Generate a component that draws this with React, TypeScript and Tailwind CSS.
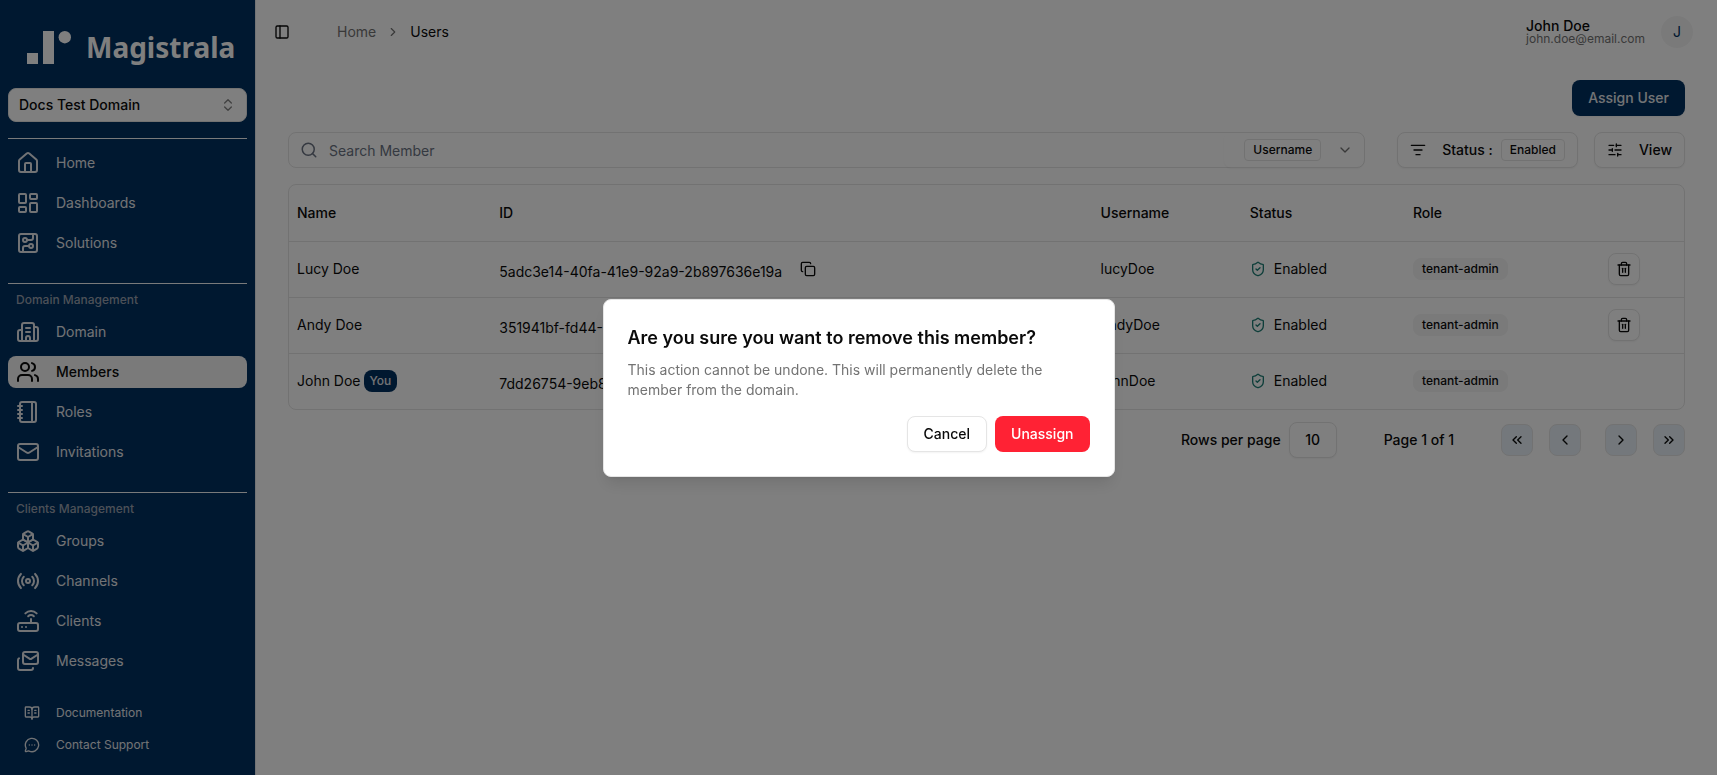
import React from "react";
import {
  BookOpenText, Boxes, ChevronDown, ChevronLeft, ChevronRight, ChevronsLeft, ChevronsRight, ChevronsUpDown,
  CircuitBoard, Copy, House, LayoutDashboard, ListFilter, Mail, Mails, MessageCircleMore, PanelLeft, Radio,
  Router, Search, ShieldCheck, SlidersHorizontal, Trash2, Users, Building2, Notebook,
} from "lucide-react";
import type { LucideIcon } from "lucide-react";

type NavItem = { label: string; icon: LucideIcon; active?: boolean };

const mainNav: NavItem[] = [
  { label: "Home", icon: House },
  { label: "Dashboards", icon: LayoutDashboard },
  { label: "Solutions", icon: CircuitBoard },
];
const domainNav: NavItem[] = [
  { label: "Domain", icon: Building2 },
  { label: "Members", icon: Users, active: true },
  { label: "Roles", icon: Notebook },
  { label: "Invitations", icon: Mail },
];
const clientsNav: NavItem[] = [
  { label: "Groups", icon: Boxes },
  { label: "Channels", icon: Radio },
  { label: "Clients", icon: Router },
  { label: "Messages", icon: Mails },
];
const members = [
  { name: "Lucy Doe", id: "5adc3e14-40fa-41e9-92a9-2b897636e19a", username: "lucyDoe", you: false },
  { name: "Andy Doe", id: "351941bf-fd44-4d0b-8c1e-6a1f0c7be2d3", username: "andyDoe", you: false },
  { name: "John Doe", id: "7dd26754-9eb8-4c57-a2f0-1f3f7c2f9b64", username: "johnDoe", you: true },
];

function Logo() {
  return (
    <div className="flex h-12 items-center gap-[15px] pl-[19px]">
      <svg viewBox="0 0 44 33" className="h-[33px] w-11 fill-white" aria-hidden="true">
        <rect x="0" y="22" width="11" height="11" />
        <rect x="16" y="0" width="11" height="33" />
        <circle cx="37.8" cy="6.2" r="6.2" />
      </svg>
      <span className="font-['Noto_Sans',sans-serif] text-[28px] leading-8 font-bold text-white">Magistrala</span>
    </div>
  );
}

function NavGroup({ title, items }: { title?: string; items: NavItem[] }) {
  return (
    <div className="border-t border-white/95">
      {title ? <h2 className="px-2 text-xs leading-8 font-medium text-gray-400">{title}</h2> : <div className="h-2" />}
      <ul className="flex flex-col gap-2">
        {items.map(({ label, icon: Icon, active }) => (
          <li key={label}>
            <a
              href="#"
              className={
                active
                  ? "flex h-8 items-center gap-4 rounded-lg bg-neutral-100 px-2 text-sm font-medium text-neutral-950"
                  : "flex h-8 items-center gap-4 rounded-lg px-2 text-sm text-gray-200"
              }
            >
              <Icon className="size-6" strokeWidth={2} />
              {label}
            </a>
          </li>
        ))}
      </ul>
    </div>
  );
}

function Sidebar() {
  return (
    <aside className="flex w-64 shrink-0 flex-col border-r border-gray-200 bg-[#003060] px-2 pt-[23px]">
      <Logo />
      <button className="mt-[17px] flex h-[34px] items-center justify-between rounded-lg border border-neutral-200 bg-white px-2.5 text-sm font-medium text-neutral-950">
        Docs Test Domain
        <ChevronsUpDown className="size-4 opacity-50" />
      </button>
      <nav className="mt-4 flex flex-col gap-6">
        <NavGroup items={mainNav} />
        <NavGroup title="Domain Management" items={domainNav} />
        <NavGroup title="Clients Management" items={clientsNav} />
      </nav>
      <div className="mt-5 flex flex-col pl-4 text-xs text-gray-200">
        <a href="#" className="flex h-8 items-center gap-4"><BookOpenText className="size-4" />Documentation</a>
        <a href="#" className="flex h-8 items-center gap-4"><MessageCircleMore className="size-4" />Contact Support</a>
      </div>
    </aside>
  );
}

function Header() {
  return (
    <header className="flex h-16 items-center justify-between pr-6 pl-[18px]">
      <div className="flex items-center">
        <button aria-label="Toggle sidebar" className="text-neutral-950"><PanelLeft className="size-4" /></button>
        <nav aria-label="Breadcrumb" className="ml-[47px] flex items-center gap-2.5 text-sm">
          <a href="#" className="text-neutral-500">Home</a>
          <ChevronRight className="size-3.5 text-neutral-500" />
          <span className="text-neutral-950">Users</span>
        </nav>
      </div>
      <div className="flex items-center gap-4">
        <div>
          <p className="text-sm leading-[14px] font-medium text-neutral-950">John Doe</p>
          <p className="text-xs leading-3 text-neutral-500">john.doe@email.com</p>
        </div>
        <span className="flex size-8 items-center justify-center rounded-full bg-neutral-100 text-sm text-[#003060]">J</span>
      </div>
    </header>
  );
}

const outline = "border border-neutral-200 bg-white shadow-xs";

function Toolbar() {
  return (
    <div className="mt-4 flex">
      <div className="flex h-9 flex-1 items-center rounded-lg border border-neutral-200 pl-[11px]">
        <Search className="size-[18px] text-gray-500" />
        <input aria-label="Search Member" placeholder="Search Member" className="mt-px ml-[11px] min-w-0 flex-1 bg-transparent text-sm placeholder:text-gray-500" />
        <button className="flex h-9 items-center rounded-lg pr-[11px] pl-5 shadow-xs">
          <span className="rounded-sm border border-neutral-200 px-2 text-xs leading-5 font-medium text-neutral-950">Username</span>
          <ChevronDown className="ml-4 size-4 text-neutral-500" />
        </button>
      </div>
      <button className={`ml-8 flex h-9 items-center rounded-lg px-3 text-sm font-medium text-neutral-950 ${outline}`}>
        <ListFilter className="size-4" />
        <span className="ml-4">Status :</span>
        <span className="ml-2 rounded-sm border border-neutral-200 px-2 text-xs leading-5">Enabled</span>
      </button>
      <button className={`ml-4 flex h-9 items-center gap-4 rounded-lg px-3 text-sm font-medium text-neutral-950 ${outline}`}>
        <SlidersHorizontal className="size-4" />
        View
      </button>
    </div>
  );
}

function MembersTable() {
  return (
    <div className="mt-4 overflow-hidden rounded-lg border border-neutral-200">
      <table className="w-full table-fixed text-sm text-neutral-950">
        <thead>
          <tr className="h-14 text-left">
            <th className="w-[14.5%] px-2 font-medium">Name</th>
            <th className="w-[43.1%] px-2 font-medium">ID</th>
            <th className="w-[10.7%] px-2 font-medium">Username</th>
            <th className="w-[11.7%] px-2 font-medium">Status</th>
            <th className="w-[14%] px-2 font-medium">Role</th>
            <th className="w-[6%] px-2" aria-label="Actions" />
          </tr>
        </thead>
        <tbody>
          {members.map((m) => (
            <tr key={m.id} className="h-14 border-t border-neutral-200">
              <td className="px-2">
                <span className="flex items-center gap-[3px]">
                  {m.name}
                  {m.you && <span className="rounded-lg bg-[#003060] px-1.5 text-xs leading-[22px] font-medium text-gray-200">You</span>}
                </span>
              </td>
              <td className="px-2">
                <span className="flex items-center">
                  <span className="pt-1.5">{m.id}</span>
                  <button aria-label="Copy ID" className="ml-[18px]"><Copy className="size-4" /></button>
                </span>
              </td>
              <td className="px-2">{m.username}</td>
              <td className="px-2">
                <span className="flex items-center gap-2"><ShieldCheck className="size-4 text-[#1d7d74]" />Enabled</span>
              </td>
              <td className="px-2">
                <span className="inline-block rounded-lg border border-neutral-100 bg-neutral-100 px-2 text-xs leading-5 font-medium">tenant-admin</span>
              </td>
              <td className="px-2">
                {!m.you && (
                  <button aria-label="Remove member" className={`flex size-8 items-center justify-center rounded-lg ${outline}`}>
                    <Trash2 className="size-4" />
                  </button>
                )}
              </td>
            </tr>
          ))}
        </tbody>
      </table>
    </div>
  );
}

function PageButton({ label, icon: Icon }: { label: string; icon: LucideIcon }) {
  return (
    <button aria-label={label} className="flex size-8 items-center justify-center rounded-lg border border-neutral-200 bg-[#e8f1f8]">
      <Icon className="size-4" />
    </button>
  );
}

function Pagination() {
  return (
    <div className="mt-3 flex items-center justify-end text-sm font-medium text-neutral-950">
      <label htmlFor="rows">Rows per page</label>
      <select id="rows" className={`ml-2 h-9 w-12 appearance-none rounded-lg text-center ${outline}`}>
        <option>10</option>
      </select>
      <span className="mx-[47px]">Page 1 of 1</span>
      <div className="flex gap-6">
        <div className="flex gap-4">
          <PageButton label="First page" icon={ChevronsLeft} />
          <PageButton label="Previous page" icon={ChevronLeft} />
        </div>
        <div className="flex gap-4">
          <PageButton label="Next page" icon={ChevronRight} />
          <PageButton label="Last page" icon={ChevronsRight} />
        </div>
      </div>
    </div>
  );
}

function RemoveDialog() {
  return (
    <div className="fixed inset-0 flex items-center justify-center bg-black/50">
      <div role="alertdialog" aria-modal="true" aria-labelledby="dlg-title" aria-describedby="dlg-text" className="flex w-full max-w-lg flex-col gap-4 rounded-lg border border-neutral-200 bg-white p-6 shadow-lg">
        <div className="flex flex-col gap-2">
          <h2 id="dlg-title" className="text-lg font-semibold text-neutral-950">Are you sure you want to remove this member?</h2>
          <p id="dlg-text" className="text-sm text-neutral-500">
            This action cannot be undone. This will permanently delete the member from the domain.
          </p>
        </div>
        <div className="flex justify-end gap-2 text-sm font-medium">
          <button className={`h-9 rounded-lg px-4 text-neutral-950 ${outline}`}>Cancel</button>
          <button className="h-9 rounded-lg bg-[#ff2234] px-4 text-white">Unassign</button>
        </div>
      </div>
    </div>
  );
}

export default function App() {
  return (
    <div className="flex min-h-screen bg-white font-['Inter',sans-serif]">
      <Sidebar />
      <div className="min-w-0 flex-1">
        <Header />
        <main className="px-8 pt-4">
          <div className="flex justify-end">
            <button className="h-9 rounded-lg bg-[#003060] px-4 text-sm font-medium text-gray-200 shadow-xs">Assign User</button>
          </div>
          <Toolbar />
          <MembersTable />
          <Pagination />
        </main>
      </div>
      <RemoveDialog />
    </div>
  );
}
